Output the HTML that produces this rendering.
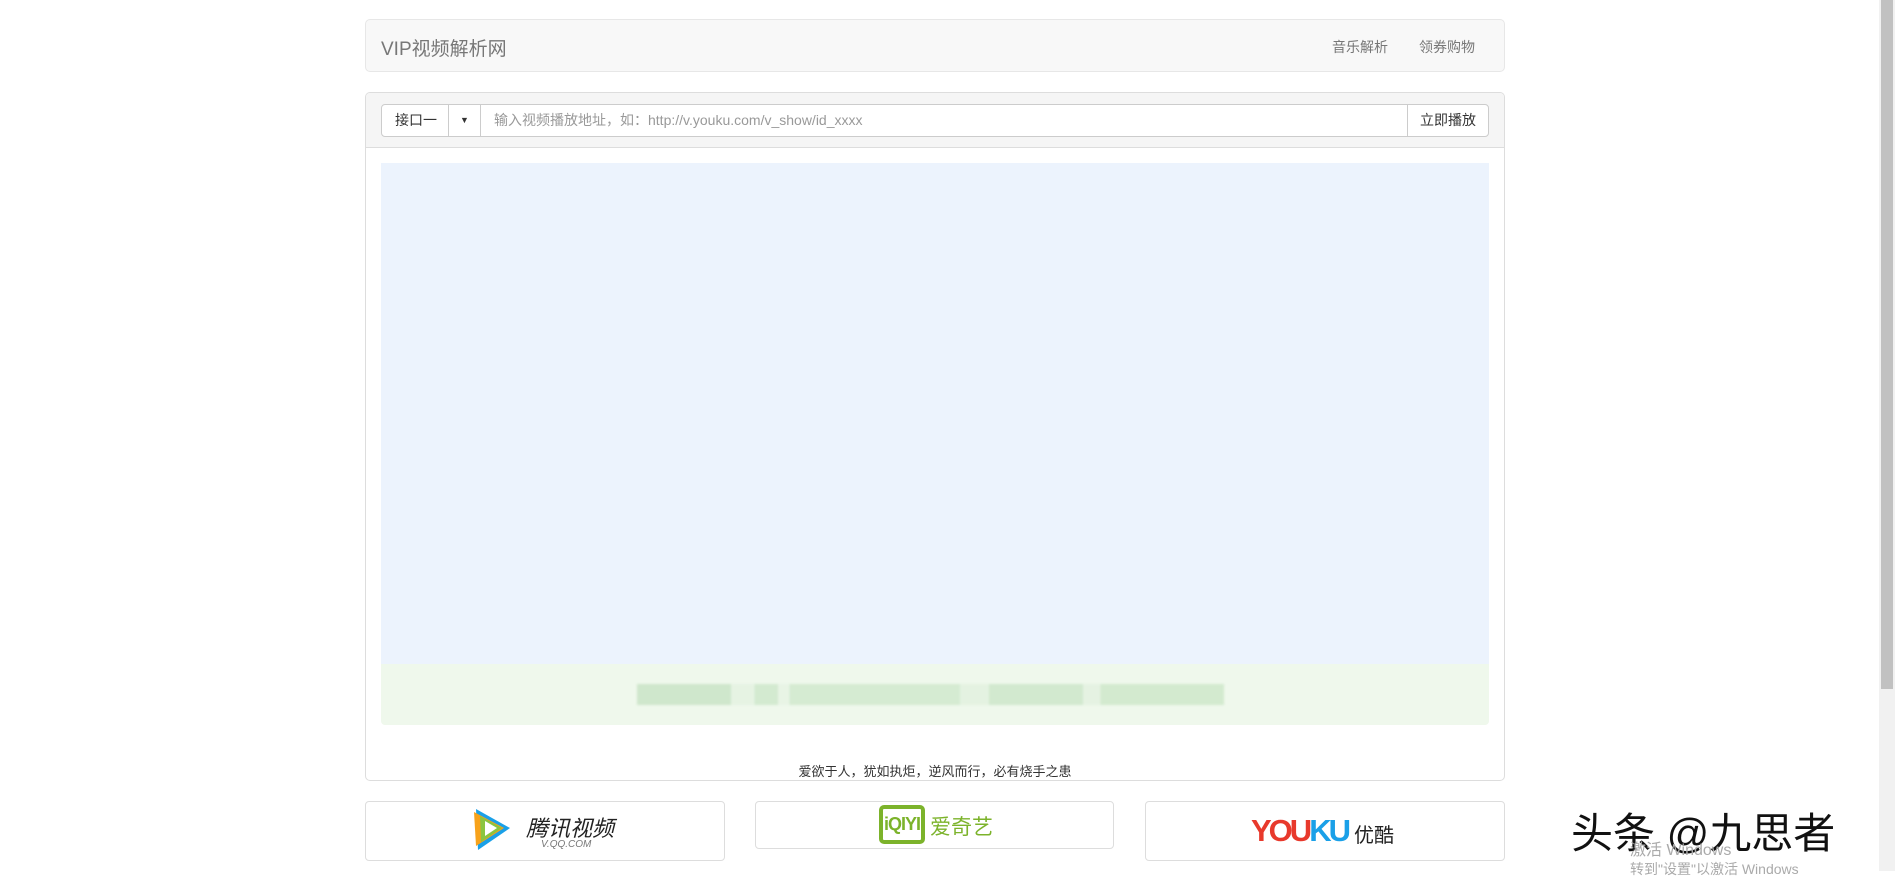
<!DOCTYPE html>
<html><head><meta charset="utf-8"><style>
body{margin:0;width:1895px;height:871px;overflow:hidden;background:#fff;font-family:"Liberation Sans","Noto Sans CJK SC",sans-serif;position:relative}
.abs{position:absolute;box-sizing:border-box}
.nav{left:365px;top:19px;width:1140px;height:53px;background:#f8f8f8;border:1px solid #e7e7e7;border-radius:5px}
.brand{left:381px;top:34px;font-size:19px;color:#777}
.nl{top:37px;font-size:14px;color:#777}
.panel{left:365px;top:92px;width:1140px;height:689px;border:1px solid #ddd;border-radius:5px}
.ph{left:366px;top:93px;width:1138px;height:55px;background:#f5f5f5;border-bottom:1px solid #ddd;border-radius:4px 4px 0 0}
.ig{top:104px;height:33px;border:1px solid #ccc;background:#fff;font-size:14px;color:#333;line-height:31px}
.box{border:1px solid #ddd;border-radius:4px;background:#fff}
</style></head><body>
<div class="abs nav"></div>
<div class="abs brand">VIP视频解析网</div>
<div class="abs nl" style="left:1332px">音乐解析</div>
<div class="abs nl" style="left:1419px">领券购物</div>
<div class="abs panel"></div>
<div class="abs ph"></div>
<div class="abs ig" style="left:381px;width:68px;border-radius:4px 0 0 4px;padding-left:13px">接口一</div>
<div class="abs ig" style="left:448px;width:33px;text-align:center;font-size:9px">▼</div>
<div class="abs ig" style="left:480px;width:928px;color:#999;padding-left:13px;font-size:14px">输入视频播放地址，如：http://v.youku.com/v_show/id_xxxx</div>
<div class="abs ig" style="left:1407px;width:82px;border-radius:0 4px 4px 0;text-align:center">立即播放</div>
<div class="abs" style="left:381px;top:163px;width:1108px;height:501px;background:#ecf3fd"></div>
<div class="abs" style="left:381px;top:664px;width:1108px;height:61px;background:#eff8ec;border-radius:0 0 4px 4px"></div>
<div class="abs" style="left:637px;top:684px;width:587px;height:21px;background:linear-gradient(90deg,#cfe7cc 0 16%,#e6f3e3 16% 20%,#d3ead0 20% 24%,#e8f4e5 24% 26%,#d5ebd2 26% 55%,#e4f2e1 55% 60%,#d2e9cf 60% 76%,#e5f2e2 76% 79%,#d3eacf 79% 100%);filter:blur(1px)"></div>
<div class="abs" style="left:365px;top:761px;width:1140px;text-align:center;font-size:13px;color:#333">爱欲于人，犹如执炬，逆风而行，必有烧手之患</div>
<div class="abs box" style="left:365px;top:801px;width:360px;height:60px"></div>
<div class="abs box" style="left:755px;top:801px;width:359px;height:48px"></div>
<div class="abs box" style="left:1145px;top:801px;width:360px;height:60px"></div>
<svg class="abs" style="left:472px;top:806px" width="40" height="46" viewBox="0 0 40 46"><path d="M4 3 L38 22 L6 44 Z" fill="#1aa0e8"/><path d="M2 6 L32 22 L4 40 Z" fill="#f7a21b"/><path d="M8 10 L30 22 L9 36 Z" fill="#8bc53f"/><path d="M13 15 L25 22 L13 30 Z" fill="#fff"/></svg>
<div class="abs" style="left:526px;top:811px;font-size:22px;font-style:italic;color:#222">腾讯视频</div>
<div class="abs" style="left:541px;top:839px;font-size:10px;font-style:italic;color:#777">V.QQ.COM</div>
<div class="abs" style="left:879px;top:805px;width:46px;height:39px;border:4px solid #7cb32b;border-radius:5px;color:#7cb32b;font-weight:bold;font-size:18px;line-height:31px;text-align:center;letter-spacing:-1px;overflow:hidden">iQIYI</div>
<div class="abs" style="left:930px;top:811px;font-size:21px;color:#7cb32b">爱奇艺</div>
<div class="abs" style="left:1251px;top:813px;font-size:31px;font-weight:bold;letter-spacing:-3px;color:#e8392c">YOU<span style="color:#1aa0e8">KU</span></div>
<div class="abs" style="left:1354px;top:819px;font-size:20px;color:#222">优酷</div>
<div class="abs" style="left:1571px;top:800px;font-size:42px;color:#111">头条 @九思者</div>
<div class="abs" style="left:1630px;top:836px;font-size:16px;color:#aaa">激活 Windows</div>
<div class="abs" style="left:1630px;top:859px;font-size:14px;color:#aaa">转到"设置"以激活 Windows</div>
<div class="abs" style="left:1879px;top:0;width:16px;height:871px;background:#f1f1f1"></div>
<div class="abs" style="left:1881px;top:0;width:12px;height:689px;background:#c1c1c1"></div>
</body></html>
